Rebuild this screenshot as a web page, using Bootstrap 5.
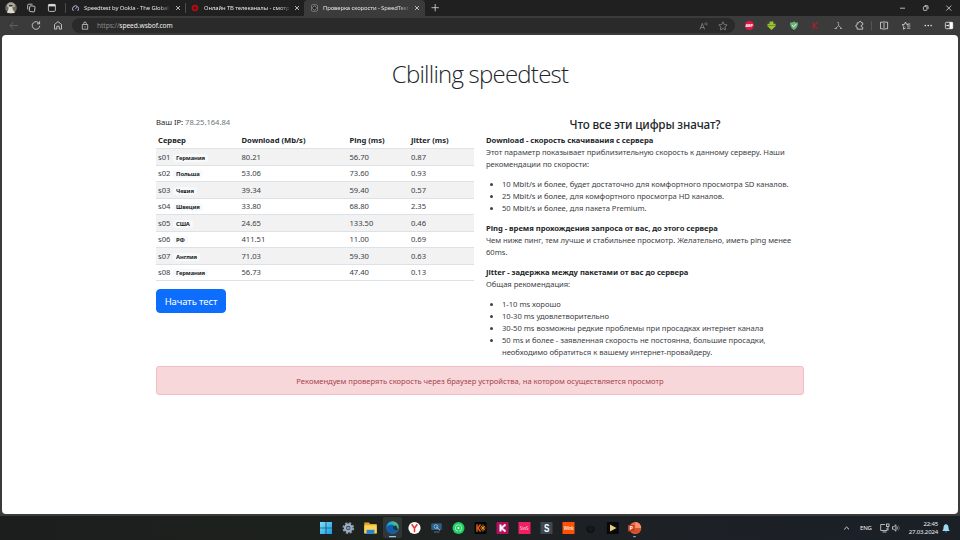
<!DOCTYPE html>
<html lang="ru">
<head>
<meta charset="utf-8">
<title>Проверка скорости - SpeedTest</title>
<link href="https://cdn.jsdelivr.net/npm/bootstrap@5.3.0/dist/css/bootstrap.min.css" rel="stylesheet">
<style>
html{font-size:8px}
body{font-family:"Noto Sans","Open Sans",sans-serif;width:960px;height:540px;overflow:hidden;background:#3b3b3b;color:#212529;font-size:7.65px;line-height:12px;letter-spacing:-.03px}
svg{display:block;flex:none}
.tabstrip{height:16px;background:#202020;color:#e4e4e4;font-size:5.9px;letter-spacing:-.1px}
.tab-item{height:16px;padding:0 3px 0 7px}
.tab-item svg:first-child{margin-right:5px}
.tab-title{flex:1 1 0;white-space:nowrap;-webkit-mask-image:linear-gradient(90deg,#000 88%,rgba(0,0,0,.2));mask-image:linear-gradient(90deg,#000 88%,rgba(0,0,0,.2))}
.tab-sep{width:1px;height:10px;background:#4b4b4b}
.tab-on{background:#3b3b3b;border-radius:4px 4px 0 0}
.toolbar{height:19px;background:#3b3b3b}
.address{height:15px;width:663px;margin-left:8px;border-radius:8px;background:#2a2a2a;font-size:6.6px;letter-spacing:-.05px;color:#8d8d8d;padding:0 4px 0 9px}
.address b{font-weight:400;color:#f0f0f0}
.viewport{height:479px;margin:0 2px;background:#fff;border-radius:4px}
.viewport .container{max-width:660px}
.page-title{font-family:"Open Sans","Noto Sans",sans-serif;font-size:24px;letter-spacing:-.77px;padding-top:25.4px;margin-bottom:27px;font-weight:300}
.info-title{font-size:11.7px;letter-spacing:-.15px;line-height:14.4px;margin-bottom:2.5px}
.speed-table{margin:4px 0 8px;table-layout:fixed;--bs-table-striped-color:#3c4146}
.speed-table>:not(caption)>*>*{padding:1.75px 2px;border-color:#dee2e6;white-space:nowrap;height:16.5px}
.speed-table td{color:#3c4146}
.speed-table .badge{font-size:5.9px;letter-spacing:-.15px;line-height:6px;padding:1px 3.4px;margin-left:.4px;vertical-align:.2px}
.body-text{color:#3c4146;padding-top:.5px}
.start-btn{font-size:9.5px;letter-spacing:-.1px;height:24px;width:70px;padding:3.5px 0;line-height:15px}
.rec-alert{background:#f8d7da;border-color:#f1bfc5;color:#a5444f;height:29px}
.taskbar{height:24px;margin-top:2px;background:linear-gradient(90deg,#1b1e1c,#1e221f 40%,#1d2126 65%,#1b2027);color:#eee}
.tray{font-size:6px;letter-spacing:-.15px;line-height:8px}
</style>
</head>
<body>
<header>
 <div class="tabstrip d-flex align-items-center">
  <svg width="65" height="16" viewBox="0 0 65 16"><circle cx="11" cy="8" r="5.8" fill="#66705c"/><path d="M7 4.5Q11 0 15 4.5V7H7z" fill="#aaa49c"/><path d="M8.5 5.5h4V9L15 13H7l1.5-4z" fill="#ded7d1"/><path d="M9 5h3.500v1.500H9z" fill="#3c302b"/><g fill="none" stroke="#ddd" stroke-width=".8"><rect x="29.500" y="6" width="5.300" height="5.700" rx="1" transform="rotate(8 32 9)"/><path d="M27.700 9.500V5.200q0-1 1-1h3.800"/><rect x="48.400" y="4.400" width="7" height="7" rx="1.200"/></g><path d="M48.400 4.200h7v2.200h-7z" fill="#ddd"/></svg>
  <span class="tab-sep"></span>
  <div class="tab-item d-flex align-items-center" style="width:119px;padding-left:6px">
   <svg width="7" height="8" viewBox="0 0 7 8"><path d="M1.300 6.800A3 3 0 1 1 5.800 6.800" fill="none" stroke="#b9bfee" stroke-width="1"/><path d="M3.300 5.200L4.700 3.200" stroke="#b9bfee" stroke-width=".8"/></svg>
   <span class="tab-title">Speedtest by Ookla - The Global</span>
   <svg width="14" height="8" viewBox="0 0 14 8"><path d="M7 2l4 4M11 2L7 6" stroke="#ddd" stroke-width=".8"/></svg>
  </div>
  <span class="tab-sep"></span>
  <div class="tab-item d-flex align-items-center" style="width:118px;padding-left:5px">
   <svg width="8" height="8" viewBox="0 0 8 8"><circle cx="4" cy="4" r="3.300" fill="#b70c18"/><circle cx="4" cy="4" r="1.600" fill="#510d10"/></svg>
   <span class="tab-title">Онлайн ТВ телеканалы - смотр</span>
   <svg width="14" height="8" viewBox="0 0 14 8"><path d="M6 2l4 4M10 2L6 6" stroke="#ddd" stroke-width=".8"/></svg>
  </div>
  <div class="tab-item tab-on d-flex align-items-center" style="width:121px;padding-left:7px">
   <svg width="7" height="8" viewBox="0 0 7 8"><rect x=".4" y=".9" width="6.200" height="6.200" rx="1.200" fill="#181818" stroke="#aaa" stroke-width=".7"/><circle cx="3.500" cy="4" r="1.900" fill="none" stroke="#aaa" stroke-width=".7"/></svg>
   <span class="tab-title">Проверка скорости - SpeedTest</span>
   <svg width="14" height="8" viewBox="0 0 14 8"><path d="M7 2l4 4M11 2L7 6" stroke="#ddd" stroke-width=".8"/></svg>
  </div>
  <svg width="20" height="16" viewBox="0 0 20 16"><path d="M6.500 7.700h7.400M10.200 4v7.400" stroke="#ddd" stroke-width=".8"/></svg>
  <svg class="ms-auto" width="70" height="16" viewBox="0 0 70 16"><g fill="none" stroke="#ddd" stroke-width=".8"><path d="M10 8.200h5M56.300 5.600l5 5M61.300 5.600l-5 5"/><rect x="33.400" y="6.600" width="3.600" height="3.800" rx=".8"/><path d="M34.700 5.500h2q1.400 0 1.400 1.400v2"/></g></svg>
 </div>
 <div class="toolbar d-flex align-items-center">
  <svg width="64" height="19" viewBox="0 0 64 19"><g transform="translate(0 .3)" fill="none" stroke-width=".8"><path d="M18 9.300h-8M13.500 5.700L9.900 9.300l3.600 3.600" stroke="#6b6b6b"/><g stroke="#ddd"><path d="M39.300 7.300A3.800 3.800 0 1 0 39.800 9.500M39.600 4.900v2.600H37"/><path d="M54.500 8.200L58 5.300l3.500 2.900v4.600h-2.300V10h-2.400v2.800h-2.300z"/></g></g></svg>
  <div class="address d-flex align-items-center">
   <svg width="16" height="10" viewBox="0 0 16 10"><path d="M1.300 3.500h5.400v4.700H1.300zM2.700 3.500V2.300q0-1.300 1.300-1.300t1.300 1.300v1.200" fill="none" stroke="#ccc" stroke-width=".8"/><circle cx="4" cy="5.800" r=".6" fill="#ccc"/></svg>
   <span>https://<b>speed.wsbof.com</b></span>
   <svg class="ms-auto" width="32" height="12" viewBox="0 0 32 12"><g fill="none" stroke="#8b8b8b" stroke-width=".75"><path d="M1 9.500L3.300 3.400 5.600 9.500M1.800 7.500h3M5.500 3q1 .7.7 1.800M7 2.300q1.300 1.200.8 3"/><path d="M24 1.800l1.200 2.700 2.900.4-2.200 2 .6 3-2.500-1.400-2.600 1.400.5-3-2.100-2 2.900-.4z"/></g></svg>
  </div>
  <svg class="ms-auto" width="225" height="19" viewBox="735 16 225 19">
   <circle cx="749.400" cy="25.500" r="4.500" fill="#df1744"/><text x="745.600" y="27" font-size="4" font-weight="700" fill="#fff" letter-spacing="-.3">ABP</text>
   <path d="M769.600 21.500h3.800v2.200h2.100v2.600l-4 3.600-4-3.600v-2.600h2.100z" fill="#9cc42f"/><path d="M767.500 25h8v.8h-8z" fill="#5f8c18"/>
   <path d="M790 22.600q2.500 0 4-1.200 1.500 1.200 4 1.200 0 5.400-4 7.400-4-2-4-7.400z" fill="#67b279"/><path d="M792 25.300l1.600 1.500 2.600-2.800" fill="none" stroke="#fff" stroke-width=".9"/>
   <path d="M813.400 22v7.200M817.600 22.300l-3.600 3.300 3.600 3.600" fill="none" stroke="#a3242b" stroke-width="1.200"/>
   <g fill="none" stroke="#b5b5b5" stroke-width=".8"><path d="M835.600 28.300l3-2.600 3 2.600M837.300 22.400q1.300-.6 1.300 1v2.300M834.500 28.500h2.500M840 28.500h2"/></g>
   <g fill="none" stroke="#ddd" stroke-width=".8"><path d="M857.200 22.800h1.700q.3-1.500 1.300-1.500t1.300 1.500h1.200v2q-1.600 0-1.600 1.200t1.600 1.200v2h-5.500v-1.900q-1.500-.3-1.500-1.300t1.500-1.300z"/><path d="M871.500 21v9.500" stroke="#5b5b5b"/><path d="M883 22.200h-2.500v6.600h2.500M885 22.200h2.600v6.600H885M884 20.800v9.400"/><path d="M905.500 22l1 2.300 1.800.3M905.500 22l-1 2.300-2.500.4 1.900 1.700-.5 2.800 2.200-1.200M907 26h3.300M907 28.200h3.300M907.500 24h2.800"/></g>
   <g fill="#e5e5e5"><circle cx="925.300" cy="25.600" r=".8"/><circle cx="928.200" cy="25.600" r=".8"/><circle cx="931.100" cy="25.600" r=".8"/></g>
   <rect x="945.400" y="22.300" width="7.300" height="6.400" rx="1" fill="none" stroke="#eee" stroke-width=".8"/><path d="M949.500 22.300h3.200v6.400h-3.200zM946.500 25.100h1.500v-.8l1 1.200-1 1.200v-.8h-1.500z" fill="#fff"/>
  </svg>
 </div>
</header>
<main class="viewport">
 <div class="container">
  <h1 class="page-title text-center">Cbilling speedtest</h1>
  <div class="row">
   <div class="col-6">
    <div>Ваш IP: <span class="text-secondary">78.25.164.84</span></div>
    <table class="table table-sm table-striped speed-table">
     <colgroup><col style="width:83.5px"><col style="width:108px"><col style="width:61.5px"><col></colgroup>
     <thead><tr><th>Сервер</th><th>Download (Mb/s)</th><th>Ping (ms)</th><th>Jitter (ms)</th></tr></thead>
     <tbody>
      <tr><td>s01 <span class="badge bg-light text-dark">Германия</span></td><td>80.21</td><td>56.70</td><td>0.87</td></tr>
      <tr><td>s02 <span class="badge bg-light text-dark">Польша</span></td><td>53.06</td><td>73.60</td><td>0.93</td></tr>
      <tr><td>s03 <span class="badge bg-light text-dark">Чехия</span></td><td>39.34</td><td>59.40</td><td>0.57</td></tr>
      <tr><td>s04 <span class="badge bg-light text-dark">Швеция</span></td><td>33.80</td><td>68.80</td><td>2.35</td></tr>
      <tr><td>s05 <span class="badge bg-light text-dark">США</span></td><td>24.65</td><td>133.50</td><td>0.46</td></tr>
      <tr><td>s06 <span class="badge bg-light text-dark">РФ</span></td><td>411.51</td><td>11.00</td><td>0.69</td></tr>
      <tr><td>s07 <span class="badge bg-light text-dark">Англия</span></td><td>71.03</td><td>59.30</td><td>0.63</td></tr>
      <tr><td>s08 <span class="badge bg-light text-dark">Германия</span></td><td>56.73</td><td>47.40</td><td>0.13</td></tr>
     </tbody>
    </table>
    <button class="btn btn-primary btn-lg start-btn" type="button">Начать тест</button>
   </div>
   <div class="col-6 body-text">
    <h4 class="info-title text-center text-dark">Что все эти цифры значат?</h4>
    <strong class="text-dark">Download - скорость скачивания с сервера</strong><br>
    Этот параметр показывает приблизительную скорость к данному серверу. Наши<br>рекомендации по скорости:
    <ul class="my-3">
     <li>10 Mbit/s и более, будет достаточно для комфортного просмотра SD каналов.</li>
     <li>25 Mbit/s и более, для комфортного просмотра HD каналов.</li>
     <li>50 Mbit/s и более, для пакета Premium.</li>
    </ul>
    <p class="mb-3"><strong class="text-dark">Ping - время прохождения запроса от вас, до этого сервера</strong><br>
    Чем ниже пинг, тем лучше и стабильнее просмотр. Желательно, иметь ping менее<br>60ms.</p>
    <strong class="text-dark">Jitter - задержка между пакетами от вас до сервера</strong><br>
    Общая рекомендация:
    <ul class="my-3">
     <li>1-10 ms хорошо</li>
     <li>10-30 ms удовлетворительно</li>
     <li>30-50 ms возможны редкие проблемы при просадках интернет канала</li>
     <li>50 ms и более - заявленная скорость не постоянна, большие просадки,<br>необходимо обратиться к вашему интернет-провайдеру.</li>
    </ul>
   </div>
  </div>
  <div class="alert rec-alert text-center mb-0">Рекомендуем проверять скорость через браузер устройства, на котором осуществляется просмотр</div>
 </div>
</main>
<footer class="taskbar d-flex align-items-center">
 <svg width="650" height="24" viewBox="0 516 650 24">
  <defs><linearGradient id="win" x1="0" y1="0" x2="1" y2="1"><stop offset="0" stop-color="#7be0fb"/><stop offset="1" stop-color="#159be8"/></linearGradient><linearGradient id="edg" x1="0" y1="1" x2="1" y2="0"><stop offset="0" stop-color="#0c59a4"/><stop offset=".5" stop-color="#1da1dc"/><stop offset="1" stop-color="#61d554"/></linearGradient></defs>
  <path d="M320 522h5.700v5.700H320zM326.300 522h5.700v5.700h-5.700zM320 528.300h5.700v5.700H320zM326.300 528.300h5.700v5.700h-5.700z" fill="url(#win)"/>
  <circle cx="348.300" cy="528" r="4.900" fill="none" stroke="#8b97a5" stroke-width="2" stroke-dasharray="2.300 1.550"/><circle cx="348.300" cy="528" r="3.300" fill="#34404e" stroke="#a3afbd" stroke-width="2.200"/><circle cx="348.300" cy="528" r="1.500" fill="#5c9fe8"/>
  <path d="M364.300 522.500h4.500l1.400 1.500h6.500v9.500h-12.400z" fill="#e7a81f"/><path d="M364.300 525.300h12.400v8h-12.400z" fill="#fcd35c"/><path d="M366.500 529.800h8v4h-8z" fill="#2386d5"/>
  <rect x="383" y="517" width="19" height="21" rx="2" fill="#303636"/><circle cx="392.500" cy="527.500" r="6.300" fill="url(#edg)"/><path d="M386.300 527.500q3-3.800 6.700-2.500 2 1 .6 3.400-.3 2 2.200 2.200 1.600 0 2.400-.6-2.700 4.700-7.500 3.600-4.300-1.100-4.400-6.100z" fill="#125da8"/><path d="M393.500 526q-1.500 3 1.500 4.200 1.700.5 3.300-.4l-2.200-4.200z" fill="#263439"/><rect x="389" y="536" width="7" height="1.300" rx=".6" fill="#a1c7e5"/>
  <circle cx="414.500" cy="528" r="6.100" fill="#fff"/><path d="M411.700 524.300l2.800 4 2.800-4M414.500 528v4.300" fill="none" stroke="#ef3125" stroke-width="1.500"/>
  <path d="M431.700 523.800h9.600v5.800h-9.600z" fill="#245c8c" stroke="#4b7ba0" stroke-width=".5"/><circle cx="436" cy="526.600" r="1.900" fill="none" stroke="#a9d2ec" stroke-width=".7"/><path d="M436 526.600l4 3.800" stroke="#b9dff6" stroke-width=".8"/><path d="M434 532h5.500" stroke="#66798a" stroke-width=".9"/>
  <circle cx="458.500" cy="528" r="6" fill="#1fcf62"/><circle cx="458.500" cy="528" r="3.300" fill="none" stroke="#d3f7df" stroke-width=".7"/><circle cx="458.500" cy="528" r="1.100" fill="#fff"/><path d="M458.500 529v4" stroke="#1fcf62" stroke-width="1"/>
  <rect x="474.500" y="522" width="12" height="12" rx="1" fill="#060606"/><path d="M477 524.300v7.500M478 528l2.500-3.600M478 528l2.500 3.600" stroke="#e85f1c" stroke-width="1.400"/><path d="M483 524.500v7M480 528h5.500M481 525.800l4 4.500M485 525.800l-4 4.500" stroke="#f28e1c" stroke-width=".9"/>
  <rect x="496.500" y="522" width="12" height="12" rx="1" fill="#b0105e"/><path d="M500.500 524.500v7M505.500 524.500l-4 3.500 4 3.500" fill="none" stroke="#fff" stroke-width="2"/>
  <rect x="518.500" y="522" width="12" height="12" fill="#f21e62"/><text x="519.700" y="529.800" font-size="5" fill="#ffc2d4" letter-spacing="-.3">SwS</text>
  <rect x="540.500" y="522" width="12" height="12" fill="#3d4851"/><text x="543.900" y="532.200" font-size="11" font-weight="700" fill="#fff" font-family="Liberation Sans" textLength="5.400" lengthAdjust="spacingAndGlyphs">S</text>
  <rect x="562.500" y="522" width="12" height="12" fill="#ff5006"/><text x="563.700" y="529.600" font-size="4.500" font-weight="600" fill="#ffe3d7" letter-spacing="-.25">Wink</text>
  <circle cx="590.500" cy="529" r="4.200" fill="#0f1214"/><circle cx="590.500" cy="529" r="2.500" fill="#15191b"/><path d="M588 526.200q2.500-1.500 5 0" fill="none" stroke="#2b3033" stroke-width=".6"/>
  <rect x="606.800" y="522" width="12" height="12" fill="#080808"/><path d="M610 524.500l6.500 3.500-6.500 3.500z" fill="#e9cb7b"/>
  <circle cx="635.300" cy="528" r="5.900" fill="#ed6c47"/><path d="M635.300 522.100a5.900 5.900 0 0 1 5.900 5.900h-5.900z" fill="#ff8f6b"/><path d="M635.300 528h5.900a5.900 5.900 0 0 1-9 5z" fill="#d35230"/><rect x="628" y="525" width="6.600" height="6.600" rx=".7" fill="#c43e1c"/><text x="629.500" y="530.200" font-size="5.500" font-weight="700" fill="#fff">P</text><rect x="633" y="536" width="3" height="1.200" rx=".6" fill="#999"/>
 </svg>
 <div class="tray ms-auto d-flex align-items-center">
  <svg width="16" height="10" viewBox="1.500 0 16 10"><path d="M.8 6.400L3.200 4l2.400 2.400" transform="translate(.9 0)" fill="none" stroke="#eee" stroke-width=".9"/></svg>
  <span>ENG</span>
  <svg width="37" height="12" viewBox="0 0 37 12"><g fill="none" stroke="#ddd" stroke-width=".8"><path d="M13 2.500H8.700v6H15V6M10.500 10h4"/><rect x="14.500" y="2" width="2.500" height="2.500"/><path d="M16 4.500v4M20.500 4.700h1.400l2-1.900v6.400l-2-1.900h-1.400z"/><path d="M25 4.500q.8 1.500 0 3" stroke="#bbb"/><path d="M26.500 3.500q1.400 2.500 0 5" stroke="#666"/></g></svg>
  <div class="text-end">22:45<br>27.03.2024</div>
  <svg class="ms-1" width="20" height="12" viewBox="0 0 20 12"><path d="M2.200 9q1.300-1 1.300-3.200Q3.600 2.500 6 2.300q2.400.2 2.500 3.500Q8.500 8 9.800 9zM5 9.700h2q-1 1.200-2 0z" fill="#9fdcf4"/></svg>
 </div>
</footer>
<script src="https://cdn.jsdelivr.net/npm/bootstrap@5.3.0/dist/js/bootstrap.bundle.min.js"></script>
</body>
</html>
